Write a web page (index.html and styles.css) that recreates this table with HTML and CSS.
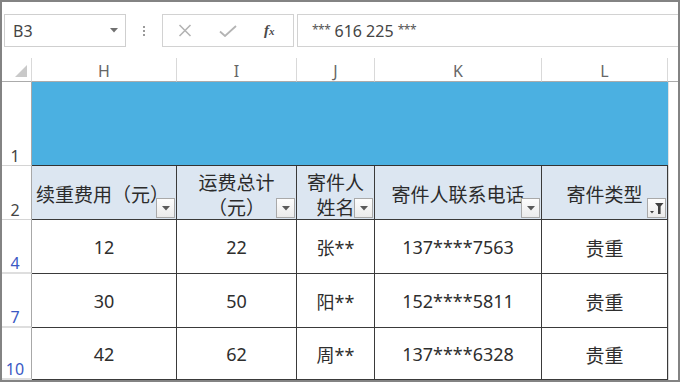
FILE: index.html
```html
<!DOCTYPE html>
<html lang="zh-CN">
<head>
<meta charset="utf-8">
<title>Sheet</title>
<link rel="stylesheet" href="styles.css">
</head>
<body>
<div class="frame">
  <div class="toolbar">
    <div class="namebox">
      <span class="name">B3</span>
      <svg class="dd" width="8" height="5" viewBox="0 0 8 5"><polygon points="0,0 8,0 4,4.5" fill="#707070"/></svg>
    </div>
    <div class="dots"><i></i><i></i><i></i></div>
    <div class="fbtns">
      <svg width="14" height="13" viewBox="0 0 14 13"><path d="M1.5 1 L12.5 12 M12.5 1 L1.5 12" stroke="#b4b4b4" stroke-width="1.6" fill="none"/></svg>
      <svg width="18" height="12" viewBox="0 0 18 12"><path d="M1 6.5 L6 11 L17 1" stroke="#b4b4b4" stroke-width="1.8" fill="none"/></svg>
      <span class="fx">f<small>x</small></span>
    </div>
    <div class="finput"><span class="ast">***</span> 616 225 <span class="ast">***</span></div>
  </div>

  <div class="sheet">
    <div class="corner"><svg width="12" height="12" viewBox="0 0 12 12"><polygon points="12,0 12,12 0,12" fill="#c9c9c9"/></svg></div>
    <div class="colh">H</div>
    <div class="colh">I</div>
    <div class="colh">J</div>
    <div class="colh">K</div>
    <div class="colh">L</div>
    <div class="colh last"></div>

    <div class="rowh">1</div>
    <div class="banner"></div>
    <div class="pad light"></div>

    <div class="rowh">2</div>
    <div class="hd left"><span>续重费用（元）</span><b class="fb"><svg width="8" height="5" viewBox="0 0 8 5"><polygon points="0,0 8,0 4,4.5" fill="#595959"/></svg></b></div>
    <div class="hd"><span>运费总计<br>（元）</span><b class="fb"><svg width="8" height="5" viewBox="0 0 8 5"><polygon points="0,0 8,0 4,4.5" fill="#595959"/></svg></b></div>
    <div class="hd"><span>寄件人<br>姓名</span><b class="fb"><svg width="8" height="5" viewBox="0 0 8 5"><polygon points="0,0 8,0 4,4.5" fill="#595959"/></svg></b></div>
    <div class="hd"><span>寄件人联系电话</span><b class="fb"><svg width="8" height="5" viewBox="0 0 8 5"><polygon points="0,0 8,0 4,4.5" fill="#595959"/></svg></b></div>
    <div class="hd"><span>寄件类型</span><b class="fb"><svg width="16" height="14" viewBox="0 0 16 14"><polygon points="1,10 5,10 3,12.5" fill="#404040"/><path d="M6 2 H14.5 L11.6 5.6 V13 H9 V5.6 Z" fill="#404040"/></svg></b></div>
    <div class="pad"></div>

    <div class="rowh blue">4</div>
    <div class="td">12</div>
    <div class="td">22</div>
    <div class="td">张**</div>
    <div class="td">137****7563</div>
    <div class="td cn">贵重</div>
    <div class="pad"></div>

    <div class="rowh blue">7</div>
    <div class="td">30</div>
    <div class="td">50</div>
    <div class="td">阳**</div>
    <div class="td">152****5811</div>
    <div class="td cn">贵重</div>
    <div class="pad"></div>

    <div class="rowh blue">10</div>
    <div class="td">42</div>
    <div class="td">62</div>
    <div class="td">周**</div>
    <div class="td">137****6328</div>
    <div class="td cn">贵重</div>
    <div class="pad"></div>
  </div>
</div>
</body>
</html>
```

FILE: styles.css
```css
* { box-sizing: border-box; }
html, body { margin: 0; padding: 0; background: #fff; }
body { width: 680px; height: 382px; overflow: hidden; }

.frame {
  width: 680px;
  height: 382px;
  border: 2px solid #838383;
  overflow: hidden;
  display: flex;
  flex-direction: column;
  background: #fff;
}

/* ---------- toolbar ---------- */
.toolbar {
  height: 56px;
  flex: none;
  display: flex;
  align-items: flex-start;
  padding: 12px 0 0 2px;
  font-family: "Noto Sans", "Open Sans", sans-serif;
}
.namebox {
  width: 122px;
  height: 33px;
  border: 1px solid #cfcfcf;
  display: flex;
  align-items: center;
  justify-content: space-between;
  padding: 0 7px 0 8px;
}
.name { font-size: 16px; color: #454545; }
.dots {
  width: 36px;
  height: 33px;
  display: flex;
  flex-direction: column;
  align-items: center;
  justify-content: center;
  gap: 2px;
}
.dots i { display: block; width: 2px; height: 2px; background: #9a9a9a; }
.fbtns {
  width: 132px;
  height: 33px;
  border: 1px solid #d2d2d2;
  display: flex;
  align-items: center;
  padding: 0 0 0 15px;
  gap: 27px;
}
.fx {
  font-family: "Liberation Serif", "DejaVu Serif", serif;
  font-style: italic;
  font-weight: bold;
  font-size: 15px;
  color: #4a4a4a;
  line-height: 1;
}
.fx small { font-size: 11px; }
.finput {
  flex: 1;
  margin-left: 3px;
  margin-right: -6px;
  height: 33px;
  border: 1px solid #d2d2d2;
  display: flex;
  align-items: center;
  padding-left: 14px;
  font-size: 16px;
  color: #454545;
  white-space: pre;
}
.ast { font-size: 12px; letter-spacing: -0.5px; position: relative; top: -1px; color: #555; }

/* ---------- sheet ---------- */
.sheet {
  flex: 1;
  display: grid;
  grid-template-columns: 30px 145px 120px 78px 167px 126px 1fr;
  grid-template-rows: 24px 84px 54px 54px 54px 1fr;
  font-family: "Noto Sans", "Noto Sans CJK SC", sans-serif;
}
.corner {
  border-right: 1px solid #d9d9d9;
  border-bottom: 1px solid #ababab;
  display: flex;
  align-items: flex-end;
  justify-content: flex-end;
  padding: 0 4px 4px 0;
}
.colh {
  border-right: 1px solid #d9d9d9;
  border-bottom: 1px solid #ababab;
  display: flex;
  align-items: center;
  justify-content: center;
  padding-top: 3px;
  font-size: 16px;
  color: #666;
}
.colh.last { border-right: none; }

.rowh {
  border-right: 1px solid #a8a8a8;
  border-bottom: 1px solid #d4d4d4;
  display: flex;
  align-items: flex-end;
  justify-content: center;
  padding-right: 3px;
  font-size: 16px;
  line-height: 18px;
  color: #444;
}
.rowh.blue { color: #3b59c4; border-bottom: 2px solid #dedede; }

.banner {
  grid-column: 2 / 7;
  background: #4bb0e1;
  border-bottom: 1px solid #333;
}
.pad { border-left: 1px solid #d9d9d9; }
.pad.light { border-left: 1px solid #e2e2e2; }

.hd {
  position: relative;
  background: #dce6f1;
  border-right: 1px solid #3a3a3a;
  border-bottom: 1px solid #3a3a3a;
  display: flex;
  align-items: center;
  justify-content: center;
  text-align: center;
  font-family: "Noto Sans CJK SC", sans-serif;
  font-size: 19px;
  line-height: 25px;
  color: #2b2b2b;
  padding-top: 2px;
  white-space: nowrap;
}
.hd.left { justify-content: flex-start; padding-left: 4px; }
.fb {
  position: absolute;
  right: 1px;
  bottom: 1px;
  width: 19px;
  height: 20px;
  border: 1px solid #a9a9a9;
  background: linear-gradient(#fdfdfd, #ebebeb);
  display: flex;
  align-items: center;
  justify-content: center;
}

.td {
  border-right: 1px solid #3a3a3a;
  border-bottom: 1px solid #3a3a3a;
  display: flex;
  align-items: center;
  justify-content: center;
  font-size: 18px;
  color: #2e2e2e;
  padding-top: 1px;
}
.td.cn { font-family: "Noto Sans CJK SC", sans-serif; font-size: 19px; }
```
